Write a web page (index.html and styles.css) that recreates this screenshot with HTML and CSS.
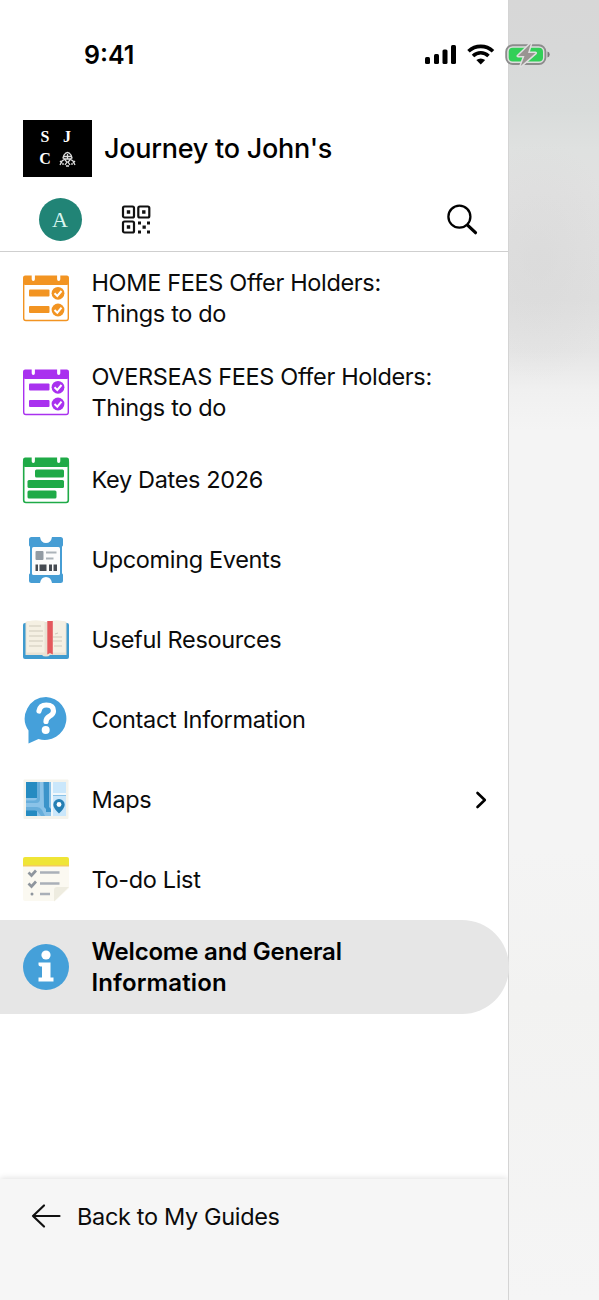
FILE: index.html
```html
<!DOCTYPE html>
<html lang="en">
<head>
<meta charset="utf-8">
<title>Journey to John's</title>
<link rel="stylesheet" href="styles.css">
</head>
<body>
<div class="screen">
  <div class="status">
    <span class="time">9:41</span>
    <svg class="status-icons" width="128" height="26" viewBox="0 0 128 26">
      <g fill="#000"><rect x="1" y="15" width="5" height="7" rx="1.5"/><rect x="10" y="12" width="5" height="10" rx="1.5"/><rect x="18.500" y="7.500" width="5" height="14.500" rx="1.500"/><rect x="27" y="3" width="5" height="19" rx="1.500"/></g>
      <g fill="none" stroke="#000" stroke-width="3.600"><path d="M44.500 9.300c7-6.600 17.500-6.600 24.500 0"/><path d="M49 14c4.500-4.300 11-4.300 15.500 0"/></g>
      <path d="M52.300 18q4.400-3.200 8.900 0l-4.450 4.400z"/>
      <rect x="82.200" y="3.200" width="39.200" height="18.800" rx="6.500" fill="#dedede" stroke="#8c8c8c" stroke-width="1.900"/>
      <rect x="84.700" y="5.700" width="34.300" height="13.900" rx="4" fill="#32cf58"/>
      <path d="M123.500 9.500q2.200.7 2.200 3t-2.200 3z" fill="#777"/>
      <path d="M106.800 1.500L94 14h6.500l-3.800 10L111.500 11H104z" fill="#999492" stroke="#dfdfdf" stroke-width="3" stroke-linejoin="round" paint-order="stroke"/>
    </svg>
  </div>

  <aside class="drawer">
    <header class="head">
      <div class="brand">
        <div class="crest">
          <span>S</span><span>J</span><span>C</span>
          <svg width="17" height="16" viewBox="0 0 17 16" fill="none" stroke="#ddd" stroke-width="1.300"><path d="M5 4q3.500-5 7 0M4.500 5.500h8M6 8h5M5 4l-1 3 2 1-3 2-2 4M12 4l1 3-2 1 3 2 2 4M6 9l2 2-2 3M11 9l-2 2 2 3M1 10l2 2M16 10l-2 2M8.500 3v5M7 15h3M4 12v2M13 12v2"/></svg>
        </div>
        <h1 class="title">Journey to John's</h1>
      </div>
      <div class="tools">
        <span class="avatar">A</span>
        <svg class="qr" width="30" height="30" viewBox="0 0 30 30">
          <g fill="none" stroke="#111" stroke-width="2.200"><rect x="2" y="1.500" width="11" height="11" rx="1.500"/><rect x="17.300" y="1.500" width="11" height="11" rx="1.500"/><rect x="2" y="16.500" width="11" height="11" rx="1.500"/></g>
          <path fill="#111" d="M5.800 5.300h3.400v3.400H5.800zM21.100 5.300h3.400v3.400h-3.400zM5.800 20.300h3.400v3.400H5.800zM17 16.500h3v3h-3zM26 16.500h3v3h-3zM21.500 20.500h3.300v3.300h-3.300zM17 25.500h3v3h-3zM26 25.500h3v3h-3z"/>
        </svg>
        <svg class="search" width="34" height="34" viewBox="0 0 34 34" fill="none" stroke="#000" stroke-linecap="round"><circle cx="14.400" cy="13.700" r="11" stroke-width="2.300"/><path d="M22.800 22.300L30.500 29.700" stroke-width="3.200"/></svg>
      </div>
    </header>

    <nav class="menu">
      <a class="item tall orange">
        <svg class="icon" viewBox="0 0 48 48"><use href="#checks"/></svg>
        <span class="label">HOME FEES Offer Holders:<br><span class="second">Things to do</span></span>
      </a>
      <a class="item tall purple">
        <svg class="icon" viewBox="0 0 48 48">
          <g id="checks">
            <rect x="1.700" y="3.500" width="44.600" height="43" rx="2.200" fill="#fff" stroke="currentColor" stroke-width="1.400"/>
            <rect x="1" y="1.500" width="46" height="9.500" rx="2.200" fill="currentColor"/>
            <path d="M11.300 0v5.300M36.700 0v5.300" stroke="#fff" stroke-width="3.200" stroke-linecap="round"/>
            <rect x="7" y="15.500" width="20.500" height="7" rx="1" fill="currentColor"/><rect x="7" y="32" width="20.500" height="7" rx="1" fill="currentColor"/>
            <circle cx="36" cy="19.300" r="6.400" fill="currentColor"/><circle cx="36" cy="36" r="6.400" fill="currentColor"/>
            <path d="M32.500 19.300l2.800 2.700 4.200-5M32.500 36l2.800 2.700 4.200-5" fill="none" stroke="#fff" stroke-width="2"/>
          </g>
        </svg>
        <span class="label">OVERSEAS FEES Offer Holders:<br><span class="second">Things to do</span></span>
      </a>
      <a class="item green">
        <svg class="icon" viewBox="0 0 48 48">
          <rect x="1.700" y="3.500" width="44.600" height="43" rx="2.200" fill="#fff" stroke="currentColor" stroke-width="1.600"/>
          <rect x="1" y="1.500" width="46" height="9.500" rx="2.200" fill="currentColor"/>
          <path d="M11.300 0v5.300M36.700 0v5.300" stroke="#fff" stroke-width="3.200" stroke-linecap="round"/>
          <rect x="13" y="13.500" width="29" height="8" rx="1.500" fill="currentColor"/><rect x="5.500" y="24" width="36.500" height="8" rx="1.500" fill="currentColor"/><rect x="5.500" y="34.500" width="29" height="8" rx="1.500" fill="currentColor"/>
        </svg>
        <span class="label">Key Dates 2026</span>
      </a>
      <a class="item">
        <svg class="icon" viewBox="0 0 48 48">
          <path fill="#469dd4" d="M9.500 1H18q1 6 6 6t6-6h8.500Q41 1 41 3.500v6q-1 .5-1 2v25q0 1.500 1 2v6Q41 47 38.500 47H30q-1-6-6-6t-6 6H9.500Q7 47 7 44.500v-6q1-.5 1-2v-25q0-1.500-1-2v-6Q7 1 9.500 1z"/>
          <rect x="10" y="11" width="28" height="28" rx="1.500" fill="#fcfcfc"/>
          <rect x="13.500" y="15" width="8" height="9" rx="1" fill="#929ba3"/>
          <path d="M24 16.500h10.500M24 22.500h7.500" stroke="#acb3b9" stroke-width="2.200"/>
          <path fill="#454a51" d="M13.500 28.500h2.500V35h-2.500zM17.500 28.500h7V35h-7zM27 28.500h3V35h-3zM31.500 28.500H35V35h-3.500z"/>
        </svg>
        <span class="label">Upcoming Events</span>
      </a>
      <a class="item">
        <svg class="icon" viewBox="0 0 48 48">
          <rect x="1" y="7" width="46" height="36" rx="2" fill="#3f9bcf"/>
          <path fill="#e9e2d4" d="M3.500 39V6q10-2.500 20.500 0 10.500-2.500 20.500 0v33H28q-1 1.500-4 1.500T20 39z"/>
          <path fill="#f5f0e3" d="M4.500 36.500V5.500q10-2 18 0v31zM25.500 36.500v-31q9-2 18 0v31z"/>
          <path d="M7 10h12M7 15h14M7 20h14M7 25h14M7 30h13M33 18l3-1M31 21h9M31 25h9M32 30h8" stroke="#d0cabc" stroke-width="1.200"/>
          <path fill="#e4585c" d="M25.300 5h5.500v33.500L28 37l-2.700 1.500z"/>
        </svg>
        <span class="label">Useful Resources</span>
      </a>
      <a class="item">
        <svg class="icon" viewBox="0 0 48 48">
          <path fill="#45a0da" d="M24 1A21.500 21.500 0 1 1 16.500 43L6.500 47.500V34.500A21.500 21.500 0 0 1 24 1z"/>
          <path d="M17 15q1-6 7.300-6 7.200 0 7.200 6 0 3.200-4 5.300-3.500 2.200-3.500 5.200" fill="none" stroke="#fff" stroke-width="5.200" stroke-linecap="round"/>
          <circle cx="23.700" cy="34" r="4" fill="#fff"/>
        </svg>
        <span class="label">Contact Information</span>
      </a>
      <a class="item">
        <svg class="icon" viewBox="0 0 48 48">
          <rect x="1.500" y="3.500" width="45" height="39.500" rx="1" fill="#f4f3ec"/>
          <path fill="#8bc3e8" d="M4 6h40v34H4z"/>
          <path fill="#258bc1" d="M4 6h11v16H4zM4 34h11v6H4z"/>
          <path fill="#67aedb" d="M15 6h3v17q0 4-4 4H4v-2.500h8q3 0 3-3zM4 31h11q3 0 5 3l3 6h-4l-3-4q-1-1.500-3-1.500H4z"/>
          <path fill="#3b94ca" d="M21.500 6h5.500v25l2 2v3h-5v-3l-2-2z"/>
          <path fill="#cae7fb" d="M31 6h13v11H31zM31 20h13v20H31z"/>
          <path stroke="#f2f8fb" stroke-width="2" d="M30 6v34M30 18h14"/>
          <path fill="#257fb3" d="M37 23a5.700 5.700 0 0 1 5.700 5.700Q42.700 32 37 37.500q-5.700-5.500-5.700-8.800A5.700 5.700 0 0 1 37 23z"/><circle cx="37" cy="28.500" r="2.400" fill="#fff"/>
        </svg>
        <span class="label">Maps</span>
        <svg class="chevron" width="12" height="20" viewBox="0 0 12 20" fill="none" stroke="#000" stroke-width="2.600" stroke-linecap="round" stroke-linejoin="round"><path d="M2.500 3l7.300 7-7.300 7"/></svg>
      </a>
      <a class="item">
        <svg class="icon" viewBox="0 0 48 48">
          <path fill="#fbf9f1" d="M1 5h46v27L33 45H3q-2 0-2-2z"/>
          <path fill="#eeece0" d="M32 45.500V34q0-3 3-3h12z"/>
          <path fill="#efe536" d="M1 9V3q0-2 2-2h42q2 0 2 2v6z"/><path fill="#f4cd59" d="M1 9h46v1.500H1z"/>
          <path d="M18 16.500h19.500M18 27.500h19.500M18 38h10" stroke="#aab0b8" stroke-width="2.400"/>
          <path d="M6.500 16.500l3 3 4.500-5M6.500 27.500l3 3 4.500-5" fill="none" stroke="#8f969e" stroke-width="2.700"/><circle cx="10" cy="38" r="1.500" fill="#8f969e"/>
        </svg>
        <span class="label">To-do List</span>
      </a>
      <a class="item tall active">
        <svg class="icon" viewBox="0 0 48 48">
          <circle cx="24" cy="24" r="23" fill="#45a0d9"/>
          <circle cx="24" cy="12" r="4.600" fill="#fff"/>
          <path fill="#fff" d="M16.500 19.500h12v15H31.500v4H16.500v-4H20v-11q-3.500 0-3.500-2z"/>
        </svg>
        <span class="label">Welcome and General<br><span class="second">Information</span></span>
      </a>
    </nav>

    <footer class="back">
      <svg width="32" height="26" viewBox="0 0 32 26" fill="none" stroke="#111" stroke-width="2.200" stroke-linecap="round" stroke-linejoin="round"><path d="M28.500 13H2M13 2.500L2 13l11 10.500"/></svg>
      <span class="back-label">Back to My Guides</span>
    </footer>
  </aside>
  <div class="behind"></div>
</div>
</body>
</html>
```

FILE: styles.css
```css
* { box-sizing: border-box; }
body { margin: 0; font-family: Inter, sans-serif; color: #0b0b0b; }
.screen { position: relative; width: 599px; height: 1300px; display: grid; grid-template-columns: 509px 90px; overflow: hidden; }
.status { position: absolute; top: 0; left: 0; width: 599px; height: 110px; padding: 42px 0 0 84px; display: flex; align-items: flex-start; z-index: 2; }
.time { width: 340px; font-size: 25px; line-height: 27px; font-weight: 600; letter-spacing: 0; color: #000; }
.status-icons { display: block; }
.drawer { display: flex; flex-direction: column; background: #fff; border-right: 1px solid #d4d4d4; }
.head { height: 252px; padding-top: 120px; border-bottom: 1px solid #cfcfcf; }
.brand { display: flex; align-items: center; gap: 12px; padding-left: 23px; }
.crest { width: 69px; height: 57px; padding: 0 3px 2px 0; background: #000; color: #fff; display: grid; grid-template-columns: 22px 22px; grid-template-rows: 22px 22px; justify-content: center; align-content: center; place-items: center; font: bold 16px/22px "Liberation Serif", serif; }
.title { margin: 0; font-size: 27px; line-height: 34px; font-weight: 500; letter-spacing: -0.27px; color: #000; white-space: nowrap; }
.tools { display: flex; align-items: center; padding: 21px 29px 0 38.5px; }
.avatar { width: 43px; height: 43px; border-radius: 50%; background: #218476; color: #d8f5ef; font: 22px/43px "Liberation Serif", serif; text-align: center; }
.qr { margin-left: 39.5px; }
.search { margin-left: auto; }
.menu { flex: 1; margin-top: -1px; }
.item { display: flex; align-items: center; height: 80px; padding: 0 21px 0 21.5px; gap: 22px; }
.item.tall { height: 94px; }
.icon { flex: none; width: 48px; height: 48px; }
.label { flex: 1; font-size: 23.5px; line-height: 31px; letter-spacing: -0.34px; white-space: nowrap; }
.orange .icon { color: #f29422; }
.purple { margin-bottom: 0.5px; }
.purple .icon { color: #a931ef; }
.green .icon { color: #1faa47; }
.active { background: #e6e6e6; border-radius: 0 47px 47px 0; margin-right: -1px; font-weight: 600; color: #000; }
.active .label { font-size: 24px; letter-spacing: -0.2px; }
.active .second { letter-spacing: 0.12px; }
.back { height: 121px; display: flex; align-items: flex-start; gap: 14px; padding: 24px 0 0 31px; background: #f6f6f6; box-shadow: 0 -1px 6px rgba(0,0,0,.12); clip-path: inset(-12px 0 0 0); }
.back-label { font-size: 23.5px; line-height: 27px; letter-spacing: -0.34px; white-space: nowrap; }
.behind { background: radial-gradient(ellipse 80px 120px at 30px 260px, rgba(214,214,214,.45), rgba(214,214,214,0)), linear-gradient(180deg, #d7d7d7 0, #d7d8d8 50px, #d9dcdb 110px, #dfe1e0 150px, #e1e1e1 190px, #dfdfdf 300px, #e5e5e5 350px, #f0f0f0 390px, #f4f4f4 430px, #f4f4f4 850px, #f2f2f1 1000px, #f5f5f5 1300px); }
```
